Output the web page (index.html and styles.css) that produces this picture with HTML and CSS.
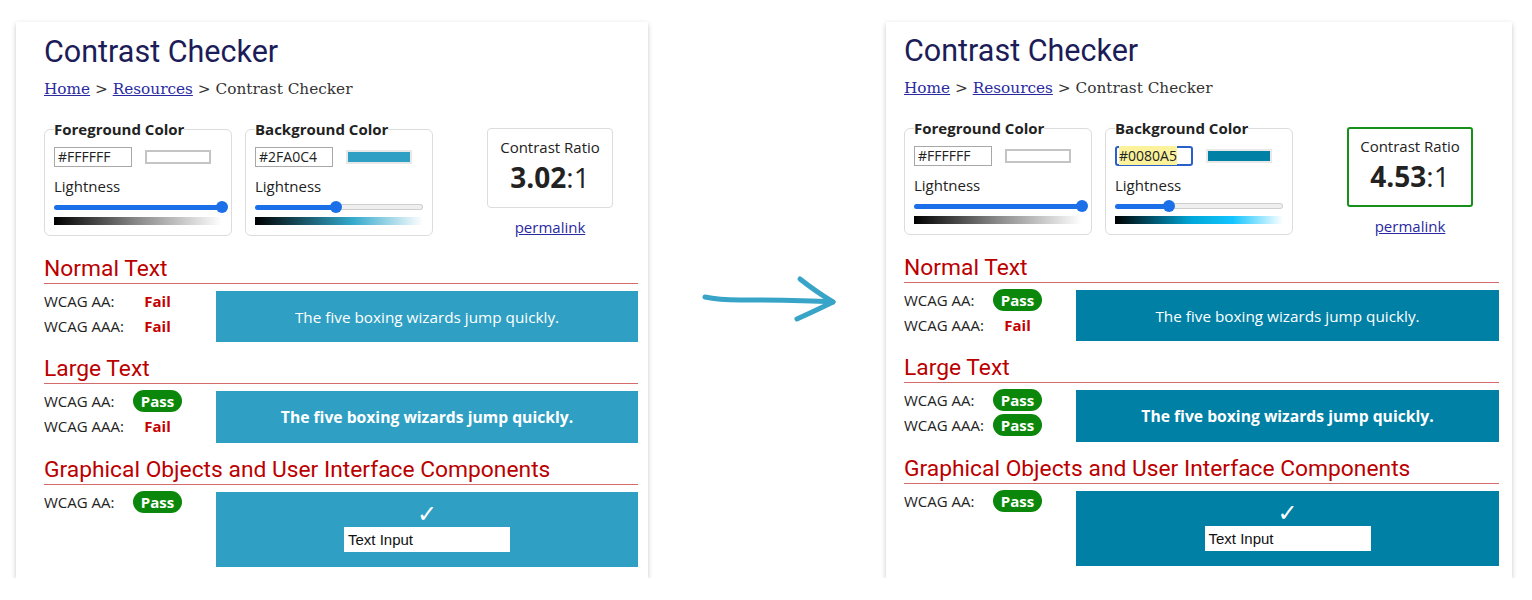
FILE: index.html
```html
<!DOCTYPE html>
<html lang="en">
<head>
<meta charset="utf-8">
<title>Contrast Checker before and after</title>
<link rel="stylesheet" href="styles.css">
</head>
<body>
<div class="page">
  <section class="panel panel--before">
    <h1 class="title">Contrast Checker</h1>
    <p class="crumbs"><a href="#">Home</a> &gt; <a href="#">Resources</a> &gt; Contrast Checker</p>
    <div class="controls">
      <fieldset class="picker">
        <legend>Foreground Color</legend>
        <div class="hexrow">
          <div class="hex"><span>#FFFFFF</span></div>
          <div class="swatch swatch--white"></div>
        </div>
        <div class="label">Lightness</div>
        <div class="slider"><div class="fill" style="width:100%"></div><div class="thumb"></div><div class="rest"></div></div>
        <div class="grad grad--gray"></div>
      </fieldset>
      <fieldset class="picker">
        <legend>Background Color</legend>
        <div class="hexrow">
          <div class="hex"><span>#2FA0C4</span></div>
          <div class="swatch swatch--a"></div>
        </div>
        <div class="label">Lightness</div>
        <div class="slider"><div class="fill" style="width:48%"></div><div class="thumb"></div><div class="rest"></div></div>
        <div class="grad grad--a"></div>
      </fieldset>
      <div class="ratio-col">
        <div class="ratio">
          <div class="ratio-label">Contrast Ratio</div>
          <div class="ratio-value"><b>3.02</b>:1</div>
        </div>
        <a class="permalink" href="#">permalink</a>
      </div>
    </div>

    <h2 class="sec">Normal Text</h2>
    <div class="result">
      <div class="checks">
        <div class="check"><span class="lbl">WCAG AA:</span><span class="res"><span class="fail">Fail</span></span></div>
        <div class="check"><span class="lbl">WCAG AAA:</span><span class="res"><span class="fail">Fail</span></span></div>
      </div>
      <div class="sample sample--a">The five boxing wizards jump quickly.</div>
    </div>

    <h2 class="sec">Large Text</h2>
    <div class="result">
      <div class="checks">
        <div class="check"><span class="lbl">WCAG AA:</span><span class="res"><span class="pass">Pass</span></span></div>
        <div class="check"><span class="lbl">WCAG AAA:</span><span class="res"><span class="fail">Fail</span></span></div>
      </div>
      <div class="sample sample--large sample--a">The five boxing wizards jump quickly.</div>
    </div>

    <h2 class="sec">Graphical Objects and User Interface Components</h2>
    <div class="result">
      <div class="checks">
        <div class="check"><span class="lbl">WCAG AA:</span><span class="res"><span class="pass">Pass</span></span></div>
      </div>
      <div class="sample sample--ui sample--a">
        <span class="tick">&#10003;</span>
        <div class="textinput">Text Input</div>
      </div>
    </div>
  </section>

  <div class="arrow-col">
    <svg class="arrow" width="140" height="50" viewBox="0 0 140 50" aria-hidden="true">
      <path d="M5 22 C 14 24, 22 25, 40 25 C 70 25, 100 25, 133 27" fill="none" stroke="#38a5c8" stroke-width="5" stroke-linecap="round"/>
      <path d="M100 4 C 110 12, 120 19, 133 27 C 121 33, 110 38, 97 44" fill="none" stroke="#38a5c8" stroke-width="5" stroke-linecap="round" stroke-linejoin="round"/>
    </svg>
  </div>

  <section class="panel panel--after">
    <h1 class="title">Contrast Checker</h1>
    <p class="crumbs"><a href="#">Home</a> &gt; <a href="#">Resources</a> &gt; Contrast Checker</p>
    <div class="controls">
      <fieldset class="picker">
        <legend>Foreground Color</legend>
        <div class="hexrow">
          <div class="hex"><span>#FFFFFF</span></div>
          <div class="swatch swatch--white"></div>
        </div>
        <div class="label">Lightness</div>
        <div class="slider"><div class="fill" style="width:100%"></div><div class="thumb"></div><div class="rest"></div></div>
        <div class="grad grad--gray"></div>
      </fieldset>
      <fieldset class="picker">
        <legend>Background Color</legend>
        <div class="hexrow">
          <div class="hex hex--focus"><span class="hl">#0080A5</span></div>
          <div class="swatch swatch--b"></div>
        </div>
        <div class="label">Lightness</div>
        <div class="slider"><div class="fill" style="width:32%"></div><div class="thumb"></div><div class="rest"></div></div>
        <div class="grad grad--b"></div>
      </fieldset>
      <div class="ratio-col">
        <div class="ratio ratio--ok">
          <div class="ratio-label">Contrast Ratio</div>
          <div class="ratio-value"><b>4.53</b>:1</div>
        </div>
        <a class="permalink" href="#">permalink</a>
      </div>
    </div>

    <h2 class="sec">Normal Text</h2>
    <div class="result">
      <div class="checks">
        <div class="check"><span class="lbl">WCAG AA:</span><span class="res"><span class="pass">Pass</span></span></div>
        <div class="check"><span class="lbl">WCAG AAA:</span><span class="res"><span class="fail">Fail</span></span></div>
      </div>
      <div class="sample sample--b">The five boxing wizards jump quickly.</div>
    </div>

    <h2 class="sec">Large Text</h2>
    <div class="result">
      <div class="checks">
        <div class="check"><span class="lbl">WCAG AA:</span><span class="res"><span class="pass">Pass</span></span></div>
        <div class="check"><span class="lbl">WCAG AAA:</span><span class="res"><span class="pass">Pass</span></span></div>
      </div>
      <div class="sample sample--large sample--b">The five boxing wizards jump quickly.</div>
    </div>

    <h2 class="sec">Graphical Objects and User Interface Components</h2>
    <div class="result">
      <div class="checks">
        <div class="check"><span class="lbl">WCAG AA:</span><span class="res"><span class="pass">Pass</span></span></div>
      </div>
      <div class="sample sample--ui sample--b">
        <span class="tick">&#10003;</span>
        <div class="textinput">Text Input</div>
      </div>
    </div>
  </section>
</div>
</body>
</html>
```

FILE: styles.css
```css
* { box-sizing: border-box; }

html, body {
  margin: 0;
  background: #ffffff;
}

body {
  font-family: "Open Sans", "Noto Sans", sans-serif;
  color: #222222;
}

.page {
  display: flex;
  align-items: flex-start;
  padding: 22px 0 0 16px;
}

.panel {
  height: 556px;
  background: #ffffff;
  box-shadow: 0 2px 5px rgba(0, 0, 0, 0.22);
}

.panel--before {
  width: 632px;
  padding: 12px 10px 12px 28px;
}

.panel--after {
  width: 626px;
  padding: 11px 13px 12px 18px;
}

.title {
  margin: 0;
  font-family: Roboto, "Noto Sans", sans-serif;
  font-weight: 400;
  font-size: 30.5px;
  line-height: 36px;
  color: #1c1c58;
}

.crumbs {
  margin: 9px 0 0;
  font-family: "DejaVu Serif", "Liberation Serif", serif;
  font-size: 15.3px;
  line-height: 20px;
  color: #333333;
}

.crumbs a {
  color: #2a2aa0;
}

.controls {
  display: flex;
  align-items: flex-start;
  margin-top: 20px;
}

.picker {
  width: 188px;
  margin: 0 13px 0 0;
  padding: 8px 9px 10px 9px;
  border: 1px solid #dcdcdc;
  border-radius: 6px;
}

.picker legend {
  padding: 0;
  margin-left: 0;
  font-weight: 700;
  font-size: 15px;
  line-height: 20px;
  color: #222222;
}

.hexrow {
  display: flex;
  align-items: center;
}

.hex {
  width: 78px;
  height: 20px;
  border: 1px solid #a8a8a8;
  padding: 0 3px;
  font-size: 14px;
  line-height: 18px;
  color: #222222;
}

.hex--focus {
  border: 2px solid #2a5fc9;
  border-radius: 3px;
  padding: 0 2px;
  line-height: 16px;
}

.hl {
  background: #fbf29b;
}

.swatch {
  width: 66px;
  height: 14px;
  margin-left: 13px;
  border: 2px solid #c4c4c4;
}

.swatch--white { background: #ffffff; }
.swatch--a { background: #2fa0c4; border-color: #e8e8e8; }
.swatch--b { background: #0080a5; border-color: #e8e8e8; }

.label {
  margin-top: 9px;
  font-size: 15px;
  line-height: 20px;
}

.slider {
  display: flex;
  align-items: center;
  height: 14px;
  margin-top: 4px;
}

.slider .fill {
  flex: none;
  height: 5px;
  margin-right: -6px;
  background: #1b6fe9;
  border-radius: 3px 0 0 3px;
}

.slider .thumb {
  flex: none;
  position: relative;
  width: 12px;
  height: 12px;
  border-radius: 50%;
  background: #1b6fe9;
}

.slider .rest {
  flex: 1;
  height: 6px;
  margin-left: -6px;
  background: #efefef;
  border: 1px solid #cfcfcf;
  border-left: 0;
  border-radius: 0 3px 3px 0;
}

.grad {
  height: 8px;
  margin-top: 3px;
}

.grad--gray { background: linear-gradient(to right, #000000, #8a8a8a 50%, #ffffff); }
.grad--a { background: linear-gradient(to right, #000000, #33a9cc 58%, #ffffff); }
.grad--b { background: linear-gradient(to right, #000000, #00a6d6 45%, #12c4ff 70%, #ffffff); }

.ratio-col {
  width: 126px;
  margin: 9px 0 0 41px;
  text-align: center;
}

.ratio {
  padding: 8px 0 12px;
  border: 1px solid #dcdcdc;
  border-radius: 4px;
}

.ratio--ok {
  border: 2px solid #17901a;
  border-radius: 3px;
  padding: 7px 0 11px;
}

.ratio-label {
  font-size: 15px;
  line-height: 20px;
}

.ratio-value {
  margin-top: 2px;
  font-size: 28px;
  line-height: 36px;
  color: #222222;
}

.permalink {
  display: block;
  margin-top: 9px;
  font-size: 15px;
  line-height: 20px;
  color: #2a2aa0;
}

.sec {
  margin: 20px 0 0;
  padding-bottom: 2px;
  border-bottom: 1px solid #d46a6a;
  font-family: Roboto, "Noto Sans", sans-serif;
  font-weight: 400;
  font-size: 22.8px;
  line-height: 24px;
  color: #bb0000;
}

.result + .sec {
  margin-top: 15px;
}

.result {
  display: flex;
  align-items: flex-start;
  margin-top: 7px;
}

.checks {
  width: 172px;
  flex: none;
  margin-top: -3px;
}

.check {
  display: flex;
  align-items: center;
  height: 25px;
  font-size: 15px;
}

.lbl {
  width: 89px;
  flex: none;
}

.res {
  width: 49px;
  flex: none;
  display: flex;
  justify-content: center;
}

.fail {
  font-weight: 700;
  color: #c40000;
}

.pass {
  display: block;
  width: 49px;
  height: 22px;
  border-radius: 11px;
  background: #0b880b;
  color: #ffffff;
  font-weight: 700;
  line-height: 22px;
  text-align: center;
}

.sample {
  flex: 1;
  height: 51px;
  display: flex;
  align-items: center;
  justify-content: center;
  color: #ffffff;
  font-size: 15.3px;
}

.sample--a { background: #2fa0c4; }
.sample--b { background: #0080a5; }

.sample--large {
  height: 52px;
  font-weight: 700;
  font-size: 15.7px;
}

.sample--ui {
  height: 75px;
  flex-direction: column;
  justify-content: flex-start;
  padding-top: 11px;
}

.tick {
  font-family: "DejaVu Sans", sans-serif;
  font-size: 24px;
  line-height: 22px;
}

.textinput {
  width: 166px;
  height: 25px;
  margin-top: 2px;
  padding: 0 4px;
  background: #ffffff;
  color: #111111;
  font-family: "Liberation Sans", Arial, sans-serif;
  font-size: 15px;
  line-height: 25px;
}

.arrow-col {
  width: 238px;
  flex: none;
  padding: 253px 0 0 52px;
}

.arrow {
  display: block;
}
```
